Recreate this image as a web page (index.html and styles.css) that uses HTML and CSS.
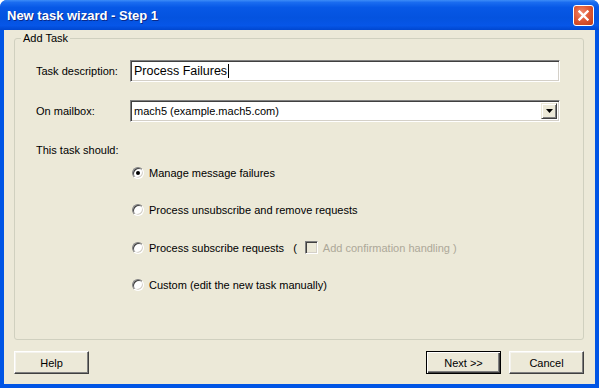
FILE: index.html
```html
<!DOCTYPE html>
<html lang="en">
<head>
    <meta charset="UTF-8">
    <title>New task wizard - Step 1</title>
    <link rel="stylesheet" href="styles.css">
</head>
<body>
    <div class="window">
        <div class="titlebar">
            <span class="title">New task wizard - Step 1</span>
            <span class="close">
                <svg width="11" height="11" viewBox="0 0 11 11">
                    <path d="M1.5 1.5 L9.5 9.5 M9.5 1.5 L1.5 9.5" stroke="#fff" stroke-width="2.4" stroke-linecap="square"/>
                </svg>
            </span>
        </div>
        <div class="client">
            <fieldset class="group">
                <legend>Add Task</legend>
                <div class="row row-first">
                    <label class="label">Task description:</label>
                    <div class="field text"><span class="value">Process Failures</span><span class="caret"></span></div>
                </div>
                <div class="row row-combo">
                    <label class="label">On mailbox:</label>
                    <div class="field combo">
                        <span class="value">mach5 (example.mach5.com)</span>
                        <span class="drop">
                            <svg width="7" height="4" viewBox="0 0 7 4"><path d="M0 0 H7 L3.5 4 Z" fill="#000"/></svg>
                        </span>
                    </div>
                </div>
                <div class="should">This task should:</div>
                <div class="options">
                    <div class="option"><span class="radio checked"></span>Manage message failures</div>
                    <div class="option"><span class="radio"></span>Process unsubscribe and remove requests</div>
                    <div class="option">
                        <span class="radio"></span>Process subscribe requests
                        <span class="paren paren-open">(</span>
                        <span class="check"></span>
                        <span class="disabled">Add confirmation handling</span>
                        <span class="paren paren-close">)</span>
                    </div>
                    <div class="option"><span class="radio"></span>Custom (edit the new task manually)</div>
                </div>
            </fieldset>
            <div class="buttons">
                <button class="btn">Help</button>
                <div class="spacer"></div>
                <button class="btn default">Next &gt;&gt;</button>
                <button class="btn">Cancel</button>
            </div>
        </div>
    </div>
</body>
</html>
```

FILE: styles.css
```css
body {
    margin: 0;
    width: 599px;
    height: 388px;
    overflow: hidden;
    font-family: 'Liberation Sans', Arial, sans-serif;
    font-size: 11px;
    color: #000;
}

.window {
    width: 599px;
    height: 388px;
    box-sizing: border-box;
    display: flex;
    flex-direction: column;
    background: #0055e5;
    border-radius: 7px 7px 0 0;
    overflow: hidden;
}

.titlebar {
    height: 30px;
    flex: none;
    display: flex;
    align-items: center;
    padding: 0 4px 0 7px;
    background: linear-gradient(180deg, #3d8cf7 0%, #1a6cf0 8%, #0758e6 25%, #0453df 60%, #0656e8 85%, #0047d0 100%);
}

.title {
    flex: 1;
    color: #fff;
    font-weight: bold;
    font-size: 13px;
    text-shadow: 1px 1px 0 #0a2a8a;
    margin-top: 1px;
}

.close {
    width: 19px;
    height: 19px;
    border: 1px solid #fff;
    border-radius: 3px;
    background: radial-gradient(circle at 40% 35%, #f08a6e 0%, #e05a37 45%, #c13a16 100%);
    display: flex;
    align-items: center;
    justify-content: center;
    margin-right: 1px;
}

.client {
    flex: 1;
    margin: 0 4px 4px 4px;
    background: #ece9d8;
    display: flex;
    flex-direction: column;
    padding: 2px 11px 10px 10px;
}

.group {
    margin: 0;
    padding: 0 0 0 21px;
    border: 1px solid #d0d0bf;
    border-radius: 3px;
    height: 308px;
    box-sizing: border-box;
}

.group legend {
    padding: 0 2px;
    margin-left: -15px;
    line-height: 13px;
}

.row {
    display: flex;
    align-items: center;
    height: 22px;
}

.row-first {
    margin-top: 15px;
}

.row-combo {
    margin-top: 18px;
}

.label {
    width: 94px;
    flex: none;
}

.field {
    width: 430px;
    height: 22px;
    box-sizing: border-box;
    background: #fff;
    border: 1px solid;
    border-color: #808080 #ffffff #ffffff #808080;
    box-shadow: inset 1px 1px 0 #404040, inset -1px -1px 0 #d4d0c8;
    display: flex;
    align-items: center;
    padding-left: 3px;
}

.field.text {
    font-size: 12.5px;
}

.caret {
    width: 1px;
    height: 14px;
    margin-left: 1px;
    background: #000;
}

.combo {
    padding-right: 2px;
}

.combo .value {
    flex: 1;
}

.drop {
    width: 16px;
    height: 16px;
    box-sizing: border-box;
    background: #ece9d8;
    border: 1px solid;
    border-color: #ece9d8 #404040 #404040 #ece9d8;
    box-shadow: inset 1px 1px 0 #fff, inset -1px -1px 0 #808080;
    display: flex;
    align-items: center;
    justify-content: center;
}

.should {
    margin-top: 21px;
    line-height: 14px;
}

.options {
    margin-top: -3px;
    padding-left: 96px;
    display: flex;
    flex-direction: column;
}

.option {
    height: 37.5px;
    display: flex;
    align-items: center;
}

.radio {
    width: 12px;
    height: 12px;
    box-sizing: border-box;
    border-radius: 50%;
    border: 1px solid;
    border-color: #808080 #ffffff #ffffff #808080;
    box-shadow: inset 1px 1px 0 #404040, inset -1px -1px 0 #d4d0c8;
    background: #fff;
    margin-right: 5px;
    display: flex;
    align-items: center;
    justify-content: center;
}

.radio.checked::after {
    content: '';
    width: 4px;
    height: 4px;
    border-radius: 50%;
    background: #000;
}

.paren-open {
    margin-left: 9px;
    margin-right: 8px;
}

.paren-close {
    margin-left: 3px;
    color: #aca899;
}

.check {
    width: 13px;
    height: 13px;
    box-sizing: border-box;
    border: 1px solid;
    border-color: #808080 #ffffff #ffffff #808080;
    box-shadow: inset 1px 1px 0 #404040, inset -1px -1px 0 #d4d0c8;
    background: #ece9d8;
    margin-right: 5px;
}

.disabled {
    color: #aca899;
}

.buttons {
    display: flex;
    margin-top: 11px;
    gap: 8px;
}

.spacer {
    flex: 1;
}

.btn {
    width: 75px;
    height: 23px;
    box-sizing: border-box;
    background: #ece9d8;
    font-family: 'Liberation Sans', Arial, sans-serif;
    font-size: 11px;
    color: #000;
    border: 1px solid;
    border-color: #ffffff #404040 #404040 #ffffff;
    box-shadow: inset -1px -1px 0 #808080, inset 1px 1px 0 #f4f3ee;
    padding: 0;
}

.btn.default {
    border: 1px solid #000;
    box-shadow: inset 1px 1px 0 #fff, inset -1px -1px 0 #404040, inset -2px -2px 0 #808080;
}
```
